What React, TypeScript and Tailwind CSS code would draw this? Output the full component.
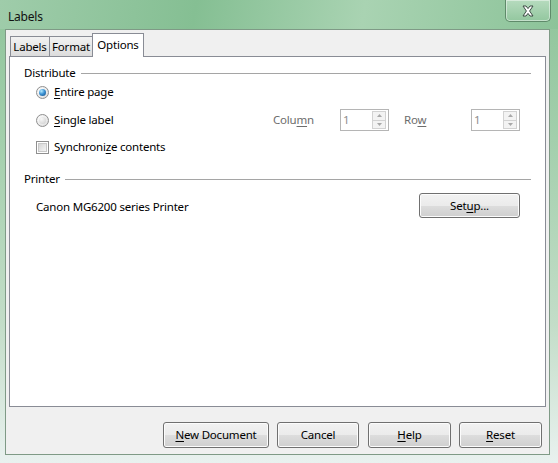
import React from "react";

const FONT = { fontFamily: '"Segoe UI", "Noto Sans", "Open Sans", sans-serif' };

function Btn({ children, className = "" }: { children: React.ReactNode; className?: string }) {
  return (
    <div
      className={`flex items-center justify-center rounded-[3px] border border-[#707070] text-black shadow-[inset_0_0_0_1px_#fcfcfc] bg-[linear-gradient(to_bottom,#f2f2f2_0%,#ebebeb_50%,#dddddd_51%,#cfcfcf_100%)] ${className}`}
    >
      {children}
    </div>
  );
}

function Radio({ checked }: { checked?: boolean }) {
  return (
    <div className="flex h-[13px] w-[13px] items-center justify-center rounded-full border border-[#8f8f8f] bg-[radial-gradient(circle_at_35%_35%,#ffffff_0%,#e9e9e9_60%,#cfcfcf_100%)]">
      {checked ? (
        <div className="h-[7px] w-[7px] rounded-full bg-[radial-gradient(circle_at_35%_30%,#b7ecff_0%,#3d94d6_45%,#13497f_100%)]" />
      ) : (
        <div className="h-[7px] w-[7px] rounded-full bg-[radial-gradient(circle_at_35%_30%,#f8f8f8_0%,#dedede_60%,#c9c9c9_100%)]" />
      )}
    </div>
  );
}

function Check() {
  return (
    <div className="flex h-[13px] w-[13px] items-center justify-center border border-[#8f8f8f] bg-white">
      <div className="h-[9px] w-[9px] border border-[#c8c8c8] bg-[linear-gradient(135deg,#d6d6d6_0%,#f4f4f4_100%)]" />
    </div>
  );
}

function Spin() {
  return (
    <div className="flex h-[22px] w-[49px] items-center border border-[#b5b5b5] bg-white pl-[2px] pr-[2px]">
      <span className="flex-1 text-[#8d8d8d]">1</span>
      <div className="flex h-[18px] w-[14px] flex-col">
        <div className="flex flex-1 items-center justify-center border border-[#d2d2d2] bg-[#f3f3f3]">
          <svg width="5" height="3" viewBox="0 0 5 3">
            <path d="M0 3 L2.5 0 L5 3 Z" fill="#a8a8a8" />
          </svg>
        </div>
        <div className="flex flex-1 items-center justify-center border border-t-0 border-[#d2d2d2] bg-[#f3f3f3]">
          <svg width="5" height="3" viewBox="0 0 5 3">
            <path d="M0 0 L2.5 3 L5 0 Z" fill="#a8a8a8" />
          </svg>
        </div>
      </div>
    </div>
  );
}

function Section({ title }: { title: string }) {
  return (
    <div className="flex h-[16px] items-center gap-[5px]">
      <span className="text-black">{title}</span>
      <div className="mr-[14px] h-px flex-1 bg-[#a5a5a5]" />
    </div>
  );
}

export default function App() {
  return (
    <div
      style={FONT}
      className="flex h-[463px] w-[558px] flex-col bg-[linear-gradient(to_bottom,#8fc49b_0%,#a3cfac_30%,#c3ddc8_70%,#e9f1ef_100%)] pb-[8px] pl-[5px] pr-[8px] text-[11.5px] tracking-[-0.2px]"
    >
      {/* title bar */}
      <div className="-ml-[5px] -mr-[8px] flex h-[29px] items-start justify-between bg-[linear-gradient(100deg,#9fccaa_0%,#85bf93_35%,#a9d3b2_65%,#8cc399_100%)] pl-[8px] pr-[7px]">
        <span className="mt-[8px] text-[12px] text-[#111]">Labels</span>
        <div className="flex h-[22px] w-[46px] items-center justify-center rounded-b-[5px] border border-t-0 border-[#5f8a6a] bg-[linear-gradient(to_bottom,#b6dbbe,#93c79f)] shadow-[inset_0_0_0_1px_rgba(255,255,255,0.45)]">
          <svg width="14" height="12" viewBox="0 0 14 12">
            <path
              d="M2 1 L5 1 L7 3.6 L9 1 L12 1 L8.6 6 L12 11 L9 11 L7 8.4 L5 11 L2 11 L5.4 6 Z"
              fill="#ffffff"
              stroke="#3c4a44"
              strokeWidth="1"
              strokeLinejoin="round"
            />
          </svg>
        </div>
      </div>

      {/* client area */}
      <div className="flex flex-1 flex-col border border-[#7f9a86] bg-[#f0f0f0] px-[3px] pt-[3px]">
        {/* tabs */}
        <div className="-mb-px flex h-[24px] items-end pl-px">
          <div className="flex h-[21px] w-[40px] items-center justify-center border border-[#898c95] bg-[linear-gradient(to_bottom,#f2f2f2,#dcdcdc)] text-black">
            Labels
          </div>
          <div className="-ml-px flex h-[21px] w-[44px] items-center justify-center border border-[#898c95] bg-[linear-gradient(to_bottom,#f2f2f2,#dcdcdc)] text-black">
            Format
          </div>
          <div className="relative z-10 -ml-px flex h-[24px] w-[52px] items-start justify-center border border-b-0 border-[#898c95] bg-white pt-[2px] text-black">
            Options
          </div>
        </div>

        {/* tab page */}
        <div className="flex flex-1 flex-col border border-[#898c95] bg-white pl-[14px] pt-[8px]">
          <Section title="Distribute" />
          <div className="flex h-[22px] items-center pl-[12px]">
            <Radio checked />
            <span className="ml-[5px] text-black">
              <u className="underline-offset-2">E</u>ntire page
            </span>
          </div>
          <div className="mt-[6px] flex h-[22px] items-center pl-[12px]">
            <div className="flex w-[237px] items-center">
              <Radio />
              <span className="ml-[5px] text-black">
                <u className="underline-offset-2">S</u>ingle label
              </span>
            </div>
            <span className="w-[67px] text-[#6d6d6d]">
              Colu<u className="underline-offset-2">m</u>n
            </span>
            <Spin />
            <span className="ml-[15px] w-[67px] text-[#6d6d6d]">
              Ro<u className="underline-offset-2">w</u>
            </span>
            <Spin />
          </div>
          <div className="mt-[5px] flex h-[22px] items-center pl-[12px]">
            <Check />
            <span className="ml-[5px] text-black">
              Synchroni<u className="underline-offset-2">z</u>e contents
            </span>
          </div>

          <div className="mt-[13px]">
            <Section title="Printer" />
          </div>
          <div className="mt-[6px] flex h-[25px] items-center pl-[12px]">
            <span className="mt-[2px] w-[383px] text-black">Canon MG6200 series Printer</span>
            <Btn className="h-[25px] w-[101px]">
              <span>
                Set<u className="underline-offset-2">u</u>p...
              </span>
            </Btn>
          </div>
        </div>

        {/* footer buttons */}
        <div className="flex h-[47px] items-start justify-end pr-[4px] pt-[15px]">
          <Btn className="h-[26px] w-[106px]">
            <span>
              <u className="underline-offset-2">N</u>ew Document
            </span>
          </Btn>
          <Btn className="ml-[8px] h-[26px] w-[82px]">Cancel</Btn>
          <Btn className="ml-[9px] h-[26px] w-[83px]">
            <span>
              <u className="underline-offset-2">H</u>elp
            </span>
          </Btn>
          <Btn className="ml-[8px] h-[26px] w-[83px]">
            <span>
              <u className="underline-offset-2">R</u>eset
            </span>
          </Btn>
        </div>
      </div>
    </div>
  );
}
